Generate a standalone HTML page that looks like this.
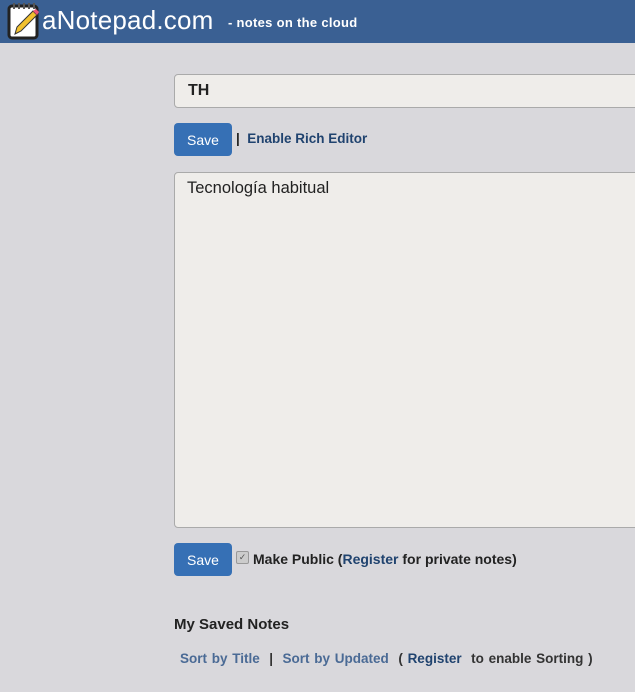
<!DOCTYPE html>
<html><head><style>
body{margin:0;width:635px;height:692px;overflow:hidden;background:#d9d8dc;font-family:"Liberation Sans",Arial,sans-serif;position:relative}
.hdr{position:absolute;left:0;top:0;width:635px;height:43px;background:#3a6093}
.logo{position:absolute;left:42px;top:5px;color:#fff;font-family:"Liberation Sans",sans-serif;font-size:26px;letter-spacing:0.2px}
.tag{position:absolute;left:228px;top:15px;color:#fff;font-family:"Liberation Sans",sans-serif;font-size:13px;font-weight:bold;letter-spacing:0.3px}
.box{position:absolute;background:#efedea;border:1px solid #aaa;border-radius:4px;box-sizing:border-box}
.btn{position:absolute;left:174px;width:58px;height:33px;background:#3670b5;border-radius:4px;color:#fff;font-size:14px;text-align:center;line-height:34px}
.t{position:absolute;font-size:14px;font-weight:bold;color:#222}
a{color:#20436f;text-decoration:none}
</style></head><body>
<div class="hdr">
<svg style="position:absolute;left:7px;top:2px" width="34" height="38" viewBox="0 0 34 38"><rect x="2" y="4" width="28" height="32" rx="3" fill="#fff" stroke="#222" stroke-width="3"/><g fill="#555"><rect x="6" y="1" width="2" height="6"/><rect x="11" y="1" width="2" height="6"/><rect x="16" y="1" width="2" height="6"/><rect x="21" y="1" width="2" height="6"/><rect x="26" y="1" width="2" height="6"/></g><path d="M8 32 L10 25 L26 9 L30 13 L14 29 Z" fill="#f2c12e" stroke="#333" stroke-width="1"/><path d="M26 9 L30 13 L32 10 L29 7 Z" fill="#e57"/></svg>
<div class="logo">aNotepad.com</div>
<div class="tag">- notes on the cloud</div>
</div>
<div class="box" style="left:174px;top:74px;width:470px;height:34px"><span style="position:absolute;left:13px;top:7px;font-size:16px;font-weight:bold;color:#222">TH</span></div>
<div class="btn" style="top:123px">Save</div>
<div class="t" style="left:236px;top:131px;font-size:13.5px">|&nbsp; <a>Enable Rich Editor</a></div>
<div class="box" style="left:174px;top:172px;width:470px;height:356px"><span style="position:absolute;left:12px;top:6px;font-size:16.5px;color:#222">Tecnología habitual</span></div>
<div class="btn" style="top:543px">Save</div>
<div style="position:absolute;left:236px;top:551px;width:11px;height:11px;background:#ccc;border:1px solid #999;border-radius:2px;font-size:9px;line-height:11px;text-align:center;color:#555">✓</div>
<div class="t" style="left:253px;top:551px;font-size:14px">Make Public (<a>Register</a> for private notes)</div>
<div class="t" style="left:174px;top:616px;font-size:15px">My Saved Notes</div>
<div class="t" style="left:180px;top:651px;font-size:13.5px;color:#333;word-spacing:1px"><a style="color:#4a6a95">Sort by Title</a> &nbsp;| &nbsp;<a style="color:#4a6a95">Sort by Updated</a> &nbsp;( <a>Register</a> &nbsp;to enable Sorting )</div>
</body></html>
